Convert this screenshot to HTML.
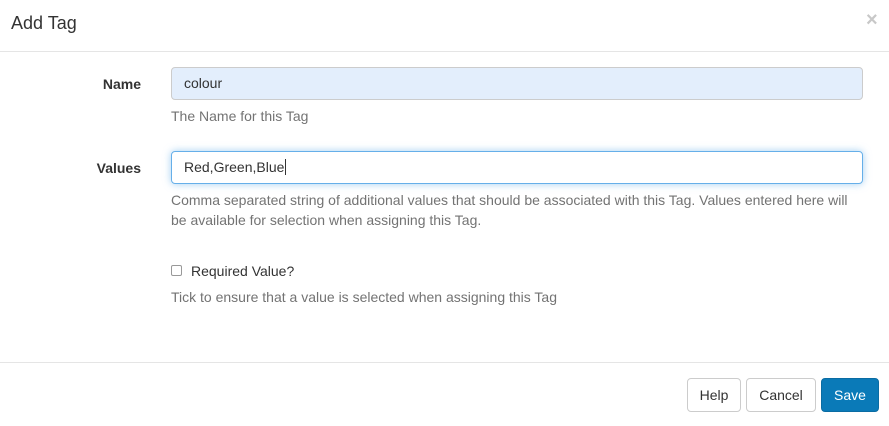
<!DOCTYPE html><html><head><style>
body{margin:0;width:889px;height:426px;background:#fff;font-family:"Liberation Sans",sans-serif;font-size:14px;color:#333;position:relative;overflow:hidden}
.a{position:absolute}
.in{position:absolute;left:171px;width:692px;height:33px;box-sizing:border-box;border:1px solid #ccc;border-radius:4px;padding:0 12px;line-height:31px;font-size:14px;color:#555}
.lbl{position:absolute;right:748px;font-weight:bold;font-size:14px}
.help{position:absolute;left:171px;color:#737373;font-size:14px;line-height:20px}
.btn{position:absolute;top:378px;height:34px;box-sizing:border-box;border:1px solid #ccc;border-radius:4px;text-align:center;line-height:32px;font-size:14px;color:#333;background:#fff}
</style></head><body>
<div class="a" style="left:11px;top:12px;font-size:18px;color:#333;line-height:22px">Add Tag</div>
<div class="a" style="left:866px;top:9px;font-size:20px;font-weight:bold;color:#c8c8c8">×</div>
<div class="a" style="left:0;top:51px;width:889px;height:1px;background:#e5e5e5"></div>
<div class="lbl" style="top:76px">Name</div>
<div class="in" style="top:67px;background:#e3eefc;color:#333">colour</div>
<div class="help" style="top:106px">The Name for this Tag</div>
<div class="lbl" style="top:160px">Values</div>
<div class="in" style="top:151px;border-color:#66afe9;box-shadow:0 0 8px rgba(102,175,233,.6);color:#333">Red,Green,Blue<span style="border-left:1px solid #333;margin-left:1px"></span></div>
<div class="help" style="top:190px;width:690px">Comma separated string of additional values that should be associated with this Tag. Values entered here will be available for selection when assigning this Tag.</div>
<div class="a" style="left:171px;top:265px;width:11px;height:11px;border:1px solid #999;border-radius:2px;box-sizing:border-box"></div>
<div class="a" style="left:191px;top:263px">Required Value?</div>
<div class="help" style="top:287px">Tick to ensure that a value is selected when assigning this Tag</div>
<div class="a" style="left:0;top:362px;width:889px;height:1px;background:#e5e5e5"></div>
<div class="btn" style="left:687px;width:54px">Help</div>
<div class="btn" style="left:746px;width:70px">Cancel</div>
<div class="btn" style="left:821px;width:58px;background:#0a7ab8;border-color:#0a6ca3;color:#fff">Save</div>
</body></html>
